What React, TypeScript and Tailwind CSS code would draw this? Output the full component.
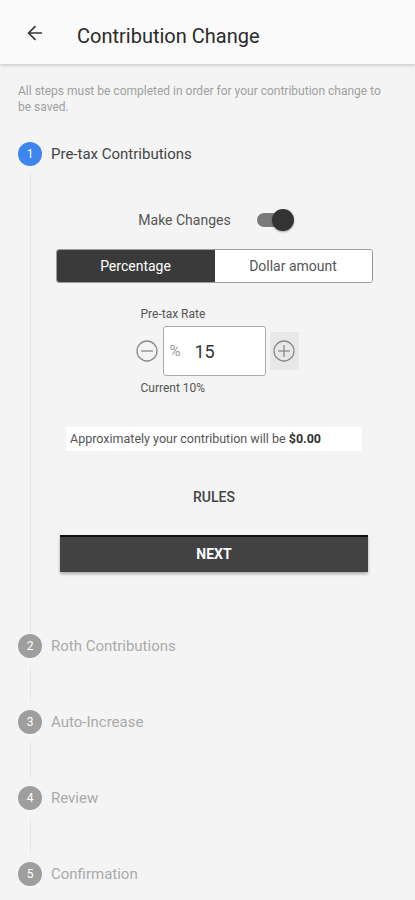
import { ArrowLeft } from 'lucide-react';

const font = { fontFamily: 'Roboto, "Noto Sans", Arial, sans-serif' };

const laterSteps = [
  { n: 2, label: 'Roth Contributions' },
  { n: 3, label: 'Auto-Increase' },
  { n: 4, label: 'Review' },
  { n: 5, label: 'Confirmation' },
];

function CircleIcon({ plus }: { plus?: boolean }) {
  return (
    <svg width="22" height="22" viewBox="0 0 22 22" fill="none" stroke="#8a8a8a" strokeWidth="1.3">
      <circle cx="11" cy="11" r="10" />
      <line x1="5" y1="11" x2="17" y2="11" />
      {plus && <line x1="11" y1="5" x2="11" y2="17" />}
    </svg>
  );
}

export default function App() {
  return (
    <div className="w-[415px] h-[900px] overflow-hidden bg-[#f4f4f4]" style={font}>
      {/* Header */}
      <div className="relative z-10 h-[64px] bg-[#fafafa] flex items-center shadow-[0_2px_3px_rgba(0,0,0,0.15)]">
        <ArrowLeft className="ml-[24px] mt-[2px] w-[22px] h-[22px] text-[#333]" strokeWidth={1.8} />
        <span className="ml-[31px] mt-[8px] text-[20px] text-[#2a2a2a]">Contribution Change</span>
      </div>

      <div className="px-[18px]">
        <p className="pt-[19px] w-[366px] text-[12px] leading-[16px] text-[#9f9f9f]">
          All steps must be completed in order for your contribution change to be saved.
        </p>

        {/* Step 1 */}
        <div className="mt-[27px] flex items-center h-[24px]">
          <div className="w-[24px] h-[24px] rounded-full bg-[#3d86f0] text-white text-[12px] flex items-center justify-center">
            1
          </div>
          <span className="ml-[9px] text-[15px] text-[#444]">Pre-tax Contributions</span>
        </div>

        <div className="ml-[12px] border-l border-[#e6e6e6] mt-[6px] pb-[62px]">
          <div className="flex flex-col items-center">
            {/* Make changes */}
            <div className="mt-[36px] h-[24px] flex items-center pl-[4px]">
              <span className="text-[14px] text-[#555]">Make Changes</span>
              <div className="relative ml-[26px] w-[37px] h-[22px] flex items-center">
                <div className="w-[32px] h-[14px] rounded-full bg-[#7a7a7a]" />
                <div className="absolute right-0 top-0 w-[22px] h-[22px] rounded-full bg-[#333] shadow-[0_1px_2px_rgba(0,0,0,0.35)]" />
              </div>
            </div>

            {/* Segmented */}
            <div className="mt-[17px] w-[317px] h-[34px] flex rounded-[3px] border border-[#9a9a9a] overflow-hidden text-[14px]">
              <div className="w-[158px] bg-[#3a3a3a] text-white flex items-center justify-center">Percentage</div>
              <div className="flex-1 bg-white text-[#555] flex items-center justify-center">Dollar amount</div>
            </div>

            {/* Rate */}
            <div className="mt-[23px] ml-[6px] flex flex-col">
              <span className="pl-[5px] text-[12px] leading-[16px] text-[#555]">Pre-tax Rate</span>
              <div className="mt-[4px] flex items-center">
                <CircleIcon />
                <div className="ml-[5px] w-[103px] h-[50px] bg-white border border-[#aaa] rounded-[3px] flex items-center">
                  <span className="ml-[6px] text-[15px] text-[#999]">%</span>
                  <span className="ml-[14px] text-[18px] text-[#333]">15</span>
                </div>
                <div className="ml-[4px] w-[29px] h-[38px] bg-[#e8e8e8] flex items-center justify-center">
                  <CircleIcon plus />
                </div>
              </div>
              <span className="mt-[4px] pl-[5px] text-[12px] leading-[16px] text-[#555]">Current 10%</span>
            </div>

            {/* Approx */}
            <div className="mt-[31px] w-[296px] h-[24px] bg-white flex items-center px-[4px] text-[12.5px] text-[#555]">
              Approximately your contribution will be&nbsp;<span className="font-bold text-[#333]">$0.00</span>
            </div>

            <div className="mt-[36px] h-[20px] flex items-center text-[14px] font-medium text-[#444]">RULES</div>

            <div className="mt-[28px] w-[308px] h-[37px] bg-[#424242] border-t-2 border-[#111] flex items-center justify-center text-white text-[14px] font-bold shadow-[0_2px_3px_rgba(0,0,0,0.3)]">
              NEXT
            </div>
          </div>
        </div>

        {/* Later steps */}
        {laterSteps.map((s, i) => (
          <div key={s.n}>
            <div className="flex items-center h-[24px]">
              <div className="w-[24px] h-[24px] rounded-full bg-[#9e9e9e] text-white text-[12px] flex items-center justify-center">
                {s.n}
              </div>
              <span className="ml-[9px] text-[15px] text-[#aaa]">{s.label}</span>
            </div>
            {i < laterSteps.length - 1 && (
              <div className="ml-[12px] h-[52px] py-[8px]">
                <div className="h-full border-l border-[#e6e6e6]" />
              </div>
            )}
          </div>
        ))}
      </div>
    </div>
  );
}
